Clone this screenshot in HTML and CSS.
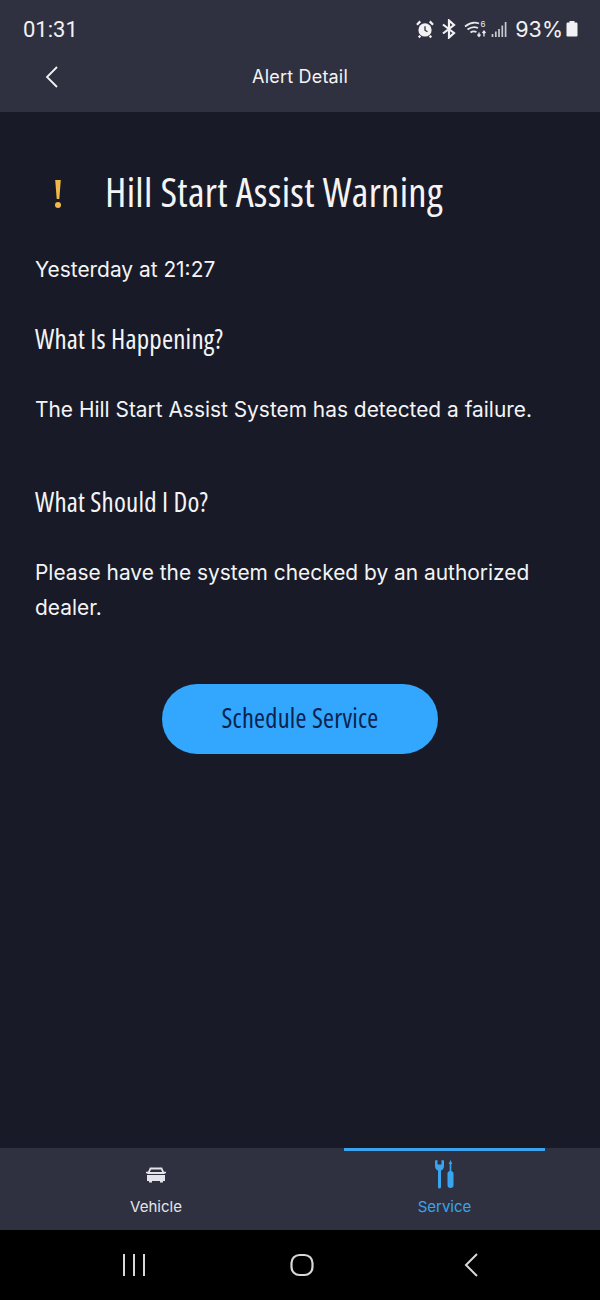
FILE: index.html
```html
<!DOCTYPE html>
<html>
<head>
    <meta charset="UTF-8">
    <title>Alert Detail</title>
    <link rel="stylesheet" href="styles.css">
</head>
<body>
    <div class="screen">
        <!-- Status bar -->
        <div class="status-bar">
            <div class="clock">01:31</div>
            <div class="status-icons">
                <svg width="18" height="20" viewBox="0 0 19 20"><circle cx="9.5" cy="11" r="7" fill="#f2f2f4"/><path d="M9.500 7v4.300l2.600 1.600" fill="none" stroke="#2f3140" stroke-width="1.400"/><path d="M1 5.500 4.500 2M18 5.500 14.500 2M4.500 17l-1.500 2M14.500 17l1.500 2" stroke="#f2f2f4" stroke-width="2.400" fill="none"/></svg>
                <svg width="16" height="20" viewBox="0 0 16 20"><path d="M2 5.500 13 14 8 18.500V1.500L13 6 2 14.500" fill="none" stroke="#f2f2f4" stroke-width="2.200"/></svg>
                <svg class="wifi" width="24" height="20" viewBox="0 0 24 20"><path d="M1 7.500C6 3.500 11 3 15 4.500M3.500 10.500C7 8 10.500 7.500 14 9M6.500 13.500C8.500 12 10.500 12 12.500 13" fill="none" stroke="#e8e8ec" stroke-width="1.700"/><path d="M15 17.500v-4M13.500 15.500l1.500 2 1.500-2M20 12v5.500M18.500 14l1.500-2 1.500 2" stroke="#e8e8ec" stroke-width="1.300" fill="none"/><text x="16.500" y="8" class="wifi-six">6</text></svg>
                <svg width="17" height="20" viewBox="0 0 17 20"><path d="M1.500 18v-3M4.800 18v-5.500M8 18v-8M11.300 18V6.500M14.600 18V3" stroke="#c9cad0" stroke-width="1.700"/></svg>
                <span class="battery-text">93%</span>
                <svg class="battery" width="12" height="20" viewBox="0 0 12 20"><path d="M3.500 2h5v2h-5z" fill="#f2f2f4"/><rect x="0.500" y="3.500" width="11" height="14" rx="1.200" fill="#f2f2f4"/></svg>
            </div>
        </div>

        <!-- Title bar -->
        <div class="title-bar">
            <svg class="back" width="14" height="22" viewBox="0 0 14 22"><path d="M12 1 2 11l10 10" fill="none" stroke="#f2f2f4" stroke-width="1.800"/></svg>
            <div class="title">Alert Detail</div>
        </div>

        <!-- Alert -->
        <div class="content">
            <div class="alert-head">
                <svg class="bang" width="8" height="30" viewBox="0 0 8 30"><path d="M1.200 1h5.600L5.300 20H2.700z" fill="#f0b848"/><circle cx="4" cy="26" r="3" fill="#f0b848"/></svg>
                <h1>Hill Start Assist Warning</h1>
            </div>
            <p class="when">Yesterday at 21:27</p>
            <h2 class="first">What Is Happening?</h2>
            <p class="text">The Hill Start Assist System has detected a failure.</p>
            <h2 class="second">What Should I Do?</h2>
            <p class="text">Please have the system checked by an authorized dealer.</p>
            <div class="action">
                <button class="schedule">Schedule Service</button>
            </div>
        </div>

        <!-- Tabs -->
        <div class="tabs">
            <div class="tab">
                <svg width="22" height="18" viewBox="0 0 22 18"><path d="M5.500 2.500h11L18.500 7h-15z" fill="none" stroke="#e4e5ea" stroke-width="1.800"/><path d="M1 6.500h3M18 6.500h3" stroke="#e4e5ea" stroke-width="1.600"/><path d="M2 9h18v6h-2v1.500h-3V15H7v1.500H4V15H2z" fill="#e4e5ea"/></svg>
                <span>Vehicle</span>
            </div>
            <div class="tab active">
                <svg width="22" height="30" viewBox="0 0 22 30"><path d="M1 1.500v5.500c0 2.500 1.500 4 3 4.500V28a1.500 1.500 0 0 0 3 0V11.500c1.500-.5 3-2 3-4.500V1.500L7.500 1v4.500h-4V1z" fill="#3aa5ee"/><path d="M16.500 1l1.800 4h-1V12c1.500.5 2.200 1.500 2.200 2.500V26a3 3 0 0 1-6 0V14.500c0-1 .7-2 2.200-2.500V5h-1z" fill="#3aa5ee"/></svg>
                <span>Service</span>
            </div>
        </div>

        <!-- System nav -->
        <div class="nav-bar">
            <svg width="24" height="22" viewBox="0 0 24 22"><path d="M2 0v22M12 0v22M22 0v22" stroke="#d8d8d8" stroke-width="2"/></svg>
            <svg class="home" width="24" height="24" viewBox="0 0 24 24"><rect x="1.500" y="2" width="21" height="20" rx="8" fill="none" stroke="#d8d8d8" stroke-width="2.200"/></svg>
            <svg width="14" height="24" viewBox="0 0 14 24"><path d="M13 1 2 12l11 11" fill="none" stroke="#d8d8d8" stroke-width="2"/></svg>
        </div>
    </div>
</body>
</html>
```

FILE: styles.css
```css
html, body { margin: 0; padding: 0; }
body { font-family: Inter, Arial, sans-serif; background: #181b27; color: #f4f4f6; }
.screen { width: 600px; height: 1300px; display: flex; flex-direction: column; overflow: hidden; }

.status-bar { height: 56px; flex: none; background: #2f3140; display: flex; justify-content: space-between; align-items: center; padding: 2px 22px 0 23px; box-sizing: border-box; }
.clock { font-family: Roboto, sans-serif; font-size: 22px; color: #f2f2f4; }
.status-icons { display: flex; align-items: center; gap: 7px; }
.wifi { margin-right: -4px; }
.battery-text { font-family: Inter, sans-serif; font-size: 21.500px; color: #f2f2f4; margin-left: 0; margin-right: -4px; }
.wifi-six { font-size: 8px; fill: #e8e8ec; font-family: Inter, sans-serif; }

.title-bar { height: 56px; flex: none; background: #2f3140; display: flex; align-items: center; justify-content: center; position: relative; padding-bottom: 15px; box-sizing: border-box; }
.back { position: absolute; left: 45px; top: 10px; }
.title { font-size: 18px; letter-spacing: 0.2px; }

.content { flex: 1; padding: 0 35px; }
.alert-head { display: flex; align-items: center; margin-top: 64px; }
.bang { margin-left: 19px; margin-right: 43px; }
h1, h2, .schedule { font-family: "Open Sans", sans-serif; font-stretch: 75%; font-weight: 400; }
h1 { font-size: 40.500px; line-height: 32px; letter-spacing: 0.3px; margin: 0 0 4px; }
h2 { font-size: 27px; line-height: 30px; letter-spacing: 0.2px; margin: 0; }
h2.first { margin-top: 37px; }
h2.second { margin-top: 60px; }
.when, .text { font-size: 20.900px; line-height: 35px; margin: 0; }
.when { margin-top: 40px; }
.text { margin-top: 38px; }
.action { display: flex; justify-content: center; margin-top: 59px; }
.schedule { width: 276px; height: 70px; border: 0; border-radius: 35px; background: #32a7fd; color: #0b2350; font-size: 26.500px; letter-spacing: 0.25px; padding: 0 0 2px; }

.tabs { height: 82px; flex: none; background: #2f3140; display: flex; }
.tab { width: 200px; margin-left: 56px; display: flex; flex-direction: column; align-items: center; justify-content: flex-end; padding-bottom: 14px; box-sizing: border-box; font-size: 15px; color: #e4e5ea; gap: 13px; }
.tab.active { width: 201px; margin-left: 88px; border-top: 3px solid #3aa5ee; color: #3aa5ee; gap: 8px; }

.nav-bar { height: 70px; flex: none; background: #000; display: flex; align-items: center; padding: 0 122px; justify-content: space-between; }
.home { margin-right: 6px; }
```
